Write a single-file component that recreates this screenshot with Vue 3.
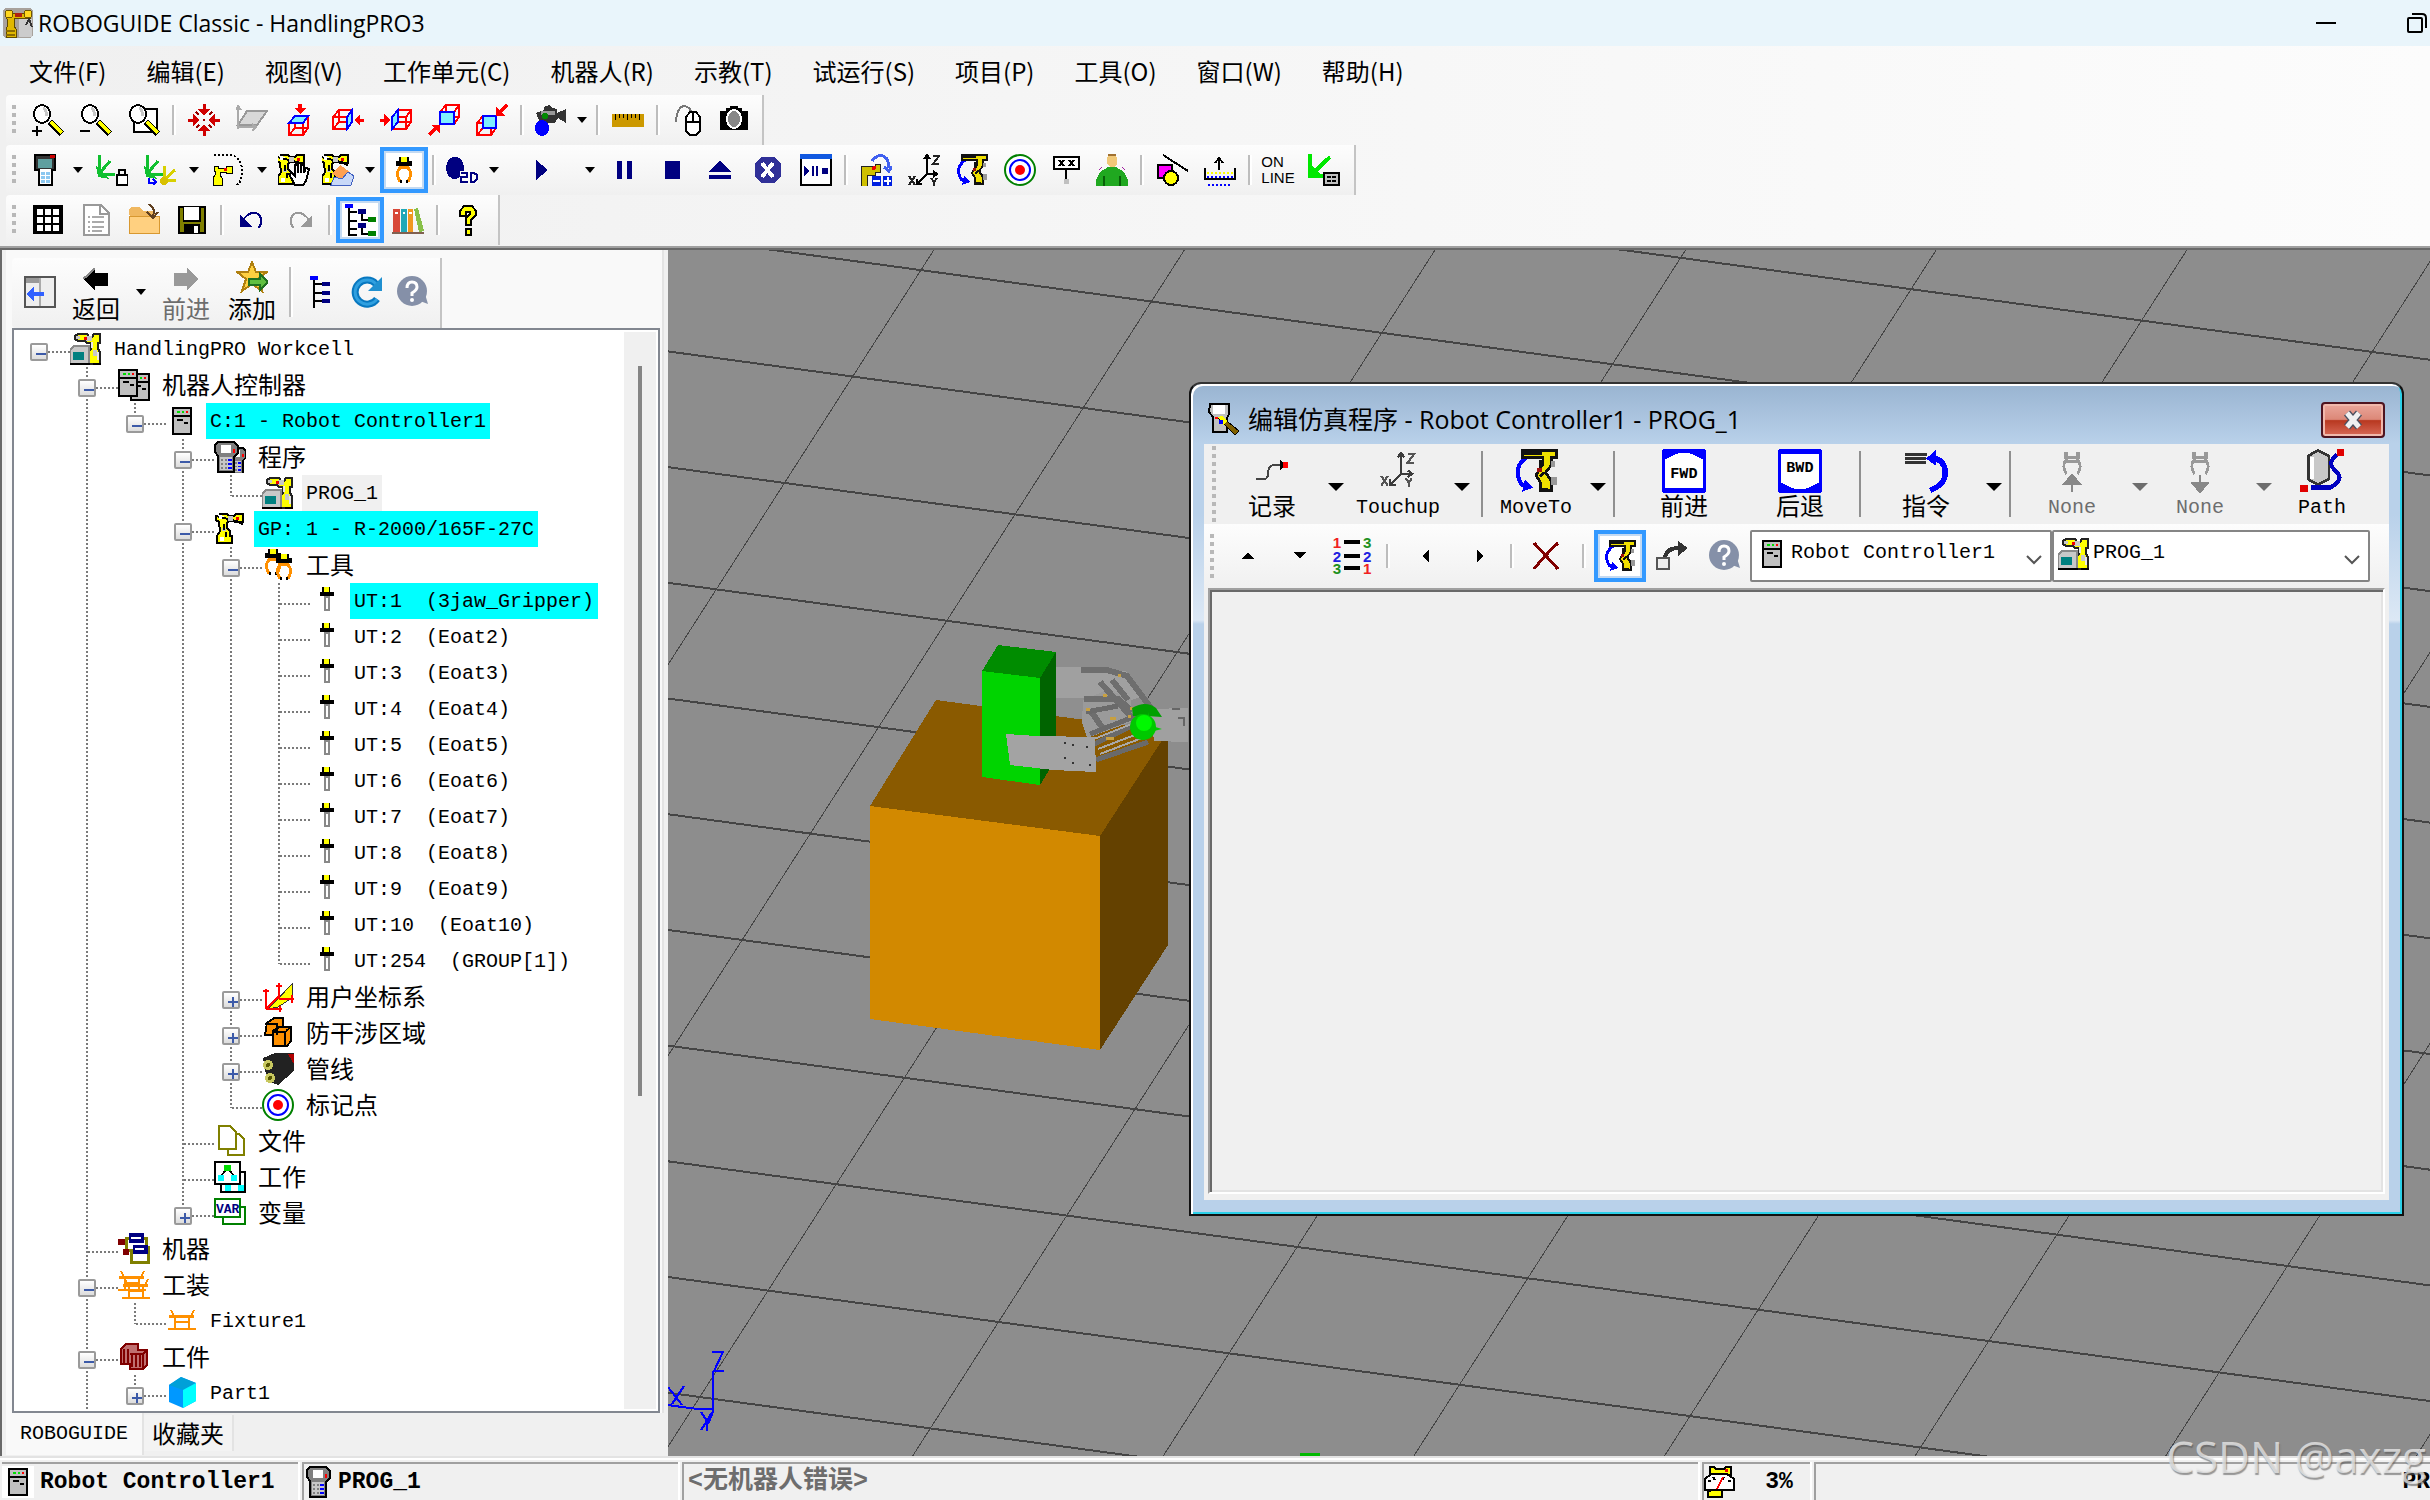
<script setup>
import { ref } from 'vue'

const menus = ['文件(F)', '编辑(E)', '视图(V)', '工作单元(C)', '机器人(R)', '示教(T)', '试运行(S)', '项目(P)', '工具(O)', '窗口(W)', '帮助(H)']

const lens = '<ellipse cx="10" cy="10" rx="8" ry="9" fill="#fff" stroke="#000" stroke-width="2"/><path d="M11 4q4 2 3 8" fill="none" stroke="#c8c8c8" stroke-width="3"/><path d="M18 18L30 30" stroke="#000" stroke-width="7"/><path d="M19 18L30 29" stroke="#ff0" stroke-width="4"/>'
const wire = (x, y) => `<path d="M${x} ${y + 7}h14v12h-14zM${x + 6} ${y}h13v12h-13zM${x} ${y + 7}l6 -7M${x + 14} ${y + 7}l5 -7M${x + 14} ${y + 19}l5 -7M${x} ${y + 19}l6 -7" fill="none" stroke="#f00" stroke-width="2"/>`
const face = (d) => `<path d="${d}" fill="#7fefff" stroke="#00f" stroke-width="2"/>`
const arm = '<path d="M5 1h8l2 2h5l2-2h7v8h-3v2M26 9h-5l-2-1h-5l-1 3v4l3 3v5h2v7H3v-7l3-5l-1-8V9L2 7V3z" fill="#ff0" stroke="#000" stroke-width="2"/><path d="M14 3h5v5h-5zM8 15h4v3H8z" fill="#c8c8c8"/><path d="M5 3h3v3H5zM6 24h4v4H6z" fill="#fff"/><rect x="22" y="4" width="3" height="3" fill="#e00"/><path d="M28 9v3M10 11v6M12 19v5" stroke="#000" stroke-width="2"/>'
const cell = '<path d="M8 1h9l2 3h3l2-3h6v9h-2v6l2 3v12H18V19l3-3v-6h-4l-2-2H8L5 6V3z" fill="#ff0" stroke="#222" stroke-width="2"/><path d="M16 3h6v5h-6zM23 17h4v6h-4zM6 3h4v3H6z" fill="#c8c8c8"/><path d="M22 9v6M28 19v8" stroke="#e8e8e8" stroke-width="2"/><rect x="14" y="4" width="3" height="3" fill="#e00"/><path d="M4 13h15v18H0V17z" fill="#c8c8c8" stroke="#888" stroke-width="2"/><rect x="3" y="19" width="11" height="8" fill="#008080"/><path d="M0 31h20M23 31h8" stroke="#000" stroke-width="2"/>'
const box = (x, y) => `<rect x="${x}" y="${y}" width="18" height="26" fill="#c0c0c0" stroke="#000" stroke-width="2"/><path d="M${x} ${y + 8}h18" stroke="#000" stroke-width="2"/><path d="M${x + 4} ${y + 4}h3M${x + 9} ${y + 4}h2" stroke="#0d0" stroke-width="2"/><path d="M${x + 13} ${y + 4}h2" stroke="#f00" stroke-width="2"/><path d="M${x + 4} ${y + 12}h6M${x + 11} ${y + 15}h4" stroke="#000" stroke-width="2" fill="none"/>`
const pendant = (x, y) => `<path d="M${x + 2} ${y}h16l4 4v7l-4 4v15h-16V15l-3-4V4z" fill="#808080" stroke="#000" stroke-width="2"/><path d="M${x + 5} ${y + 3}h10v8h-10z" fill="#fff"/><path d="M${x + 4} ${y + 15}h12v13h-12z" fill="#c8c8c8"/><path d="M${x + 5} ${y + 18}h6m-6 4h6m-6 4h6" stroke="#808080" stroke-width="2" stroke-dasharray="2 2"/><path d="M${x + 12} ${y + 18}h4m-4 4h4m-4 4h4" stroke="#00f" stroke-width="2"/><rect x="${x + 17}" y="${y + 7}" width="2" height="4" fill="#f00"/>`
const claw = (x, y) => `<path d="M${x + 5} ${y + 10}q-5 4 -3 10l2 5M${x + 11} ${y + 10}q5 4 3 10l-2 5M${x + 4} ${y + 10}h8" fill="none" stroke="#ff9000" stroke-width="3"/><path d="M${x + 3} ${y}h10v4h3v5h-16v-5h3z" fill="#000"/><rect x="${x + 5}" y="${y}" width="6" height="5" fill="#ff0"/><path d="M${x + 5} ${y + 23}v3M${x + 11} ${y + 23}v3" stroke="#000" stroke-width="2"/>`
const moveTo = '<path d="M9 6Q1 12 3 20T10 27" fill="none" stroke="#00f" stroke-width="3"/><path d="M6 31l8-3l-6-6z" fill="#00f"/><path d="M6 1h25v5h-4v6l-4 5l4 6v7h-8v-6l-3-5l5-8V6H6z" fill="#f0e000" stroke="#111" stroke-width="2"/><path d="M6 3h14M22 9h-3v4M22 17l-3 3M20 29h5" fill="none" stroke="#111" stroke-width="2"/><rect x="17" y="14" width="3" height="3" fill="#a01010"/><path d="M27 20h4v6h-4zM27 9h3v4h-3z" fill="#999"/>'
const target = '<g shape-rendering="auto"><circle cx="16" cy="16" r="15" fill="#fff" stroke="#008000" stroke-width="2"/><circle cx="16" cy="16" r="10" fill="none" stroke="#00f" stroke-width="2"/><circle cx="16" cy="16" r="5" fill="#f00"/></g>'
const treeArt = '<path d="M0 0h8v4H0z" fill="#00f"/><path d="M4 4v28M4 8h8M4 17h8M4 25h8" stroke="#000" stroke-width="2" fill="none"/>'
const help = '<g shape-rendering="auto"><circle cx="16" cy="15" r="15" fill="#8590a8"/><path d="M24 25l8 3l-3-10z" fill="#8590a8"/><path d="M11 12q0-6 5-6t5 5q0 3-5 6v3" fill="none" stroke="#fff" stroke-width="3"/><circle cx="16" cy="24" r="2" fill="#fff"/></g>'
const fixture = (x, y) => `<path d="M${x + 3} ${y}l3 6h17l3-6M${x} ${y + 19}h28M${x + 7} ${y + 7}v12M${x + 21} ${y + 7}v12M${x + 7} ${y + 12}h14" fill="none" stroke="#ff9000" stroke-width="2"/><path d="M${x + 1} ${y + 6}h25" stroke="#ff9000" stroke-width="3"/>`
const xyz = '<path d="M19 2v18h9M19 20L9 30M16 5l3-4l3 4M25 17l4 3l-4 3M9 25v5h5" fill="none" stroke="#000" stroke-width="2"/><path d="M25 2h6l-6 8h6M1 22l6 9M7 22l-6 9M23 24l3 4l3-4M26 28v4" fill="none" stroke="#222" stroke-width="2"/>'
const axes = (c) => `<path d="M3 1v19l16 1M3 20L14 7" fill="none" stroke="${c}" stroke-width="3"/><path d="M0 12l2 11l12 2z" fill="${c}"/>`

const art = {
  app: '<rect x="1" y="1" width="30" height="30" rx="4" fill="#a8a29c"/><rect x="17" y="12" width="13" height="18" fill="#ccc"/><path d="M4 6h24v5H12v8l2 3v8H4v-8l2-4z" fill="#e0b800" stroke="#604c00"/><circle cx="7" cy="7" r="4" fill="#ffd820" stroke="#705800"/><circle cx="26" cy="7" r="4" fill="#ffd820" stroke="#705800"/><path d="M13 6h7v4h-7z" fill="#b02010"/><path d="M24 18l3-6l3 8" fill="none" stroke="#333" stroke-width="2"/><path d="M4 24h9M4 28h9" stroke="#8c6c00" stroke-width="2"/>',
  zoomIn: lens + '<path d="M0 27h10M5 22v10" stroke="#000" stroke-width="2"/>',
  zoomOut: lens + '<path d="M0 27h10" stroke="#000" stroke-width="2"/>',
  zoomWin: '<rect x="6" y="5" width="23" height="23" fill="#fff" stroke="#000" stroke-width="2"/>' + lens,
  center: '<path d="M16 0v10M16 22v10M0 16h10M22 16h10" stroke="#d00000" stroke-width="3"/><path d="M10 5h12l-6 7zM10 27h12l-6-7zM5 10v12l7-6zM27 10v12l-7-6z" fill="#d00000"/><path d="M8 8l3 3M21 21l3 3M24 8l-3 3M11 21l-3 3M15 16h2" stroke="#900" stroke-width="2"/>',
  plane: '<path d="M11 7h20L21 21H2z" fill="#d8d8d8" stroke="#999" stroke-width="2"/><path d="M2 25V4M2 23h16M0 6l2-4l3 4M16 20l4 3l-4 4" fill="none" stroke="#aaa" stroke-width="2"/>',
  cubeTop: wire(5, 12) + face('M5 19l6-7h13l-5 7z') + '<path d="M16 0v6" stroke="#f00" stroke-width="4"/><path d="M10 4h12l-6 6z" fill="#f00"/>',
  cubeRight: wire(1, 6) + face('M15 13l5-7v12l-5 7z') + '<path d="M32 16h-6" stroke="#f00" stroke-width="3"/><path d="M28 10v12l-6-6z" fill="#f00"/>',
  cubeLeft: wire(12, 6) + face('M12 13l6-7v12l-6 7z') + '<path d="M0 16h6" stroke="#f00" stroke-width="3"/><path d="M4 10v12l6-6z" fill="#f00"/>',
  cubeFront: wire(12, 1) + face('M12 8h14v12H12z') + '<path d="M1 31l7-7" stroke="#f00" stroke-width="3"/><path d="M3 21h9v9z" fill="#f00"/>',
  cubeBack: wire(1, 12) + face('M7 12h13v12H7z') + '<path d="M31 1l-7 7" stroke="#f00" stroke-width="3"/><path d="M20 3v9h9z" fill="#f00"/>',
  camera: '<path d="M2 9l8-3V3l5-2l4 3l4 1v4l9-4v14l-8-5l-3 5H6z" fill="#333"/><path d="M7 7h14v4H7z" fill="#999"/><circle cx="11" cy="12" r="3" fill="#080"/><ellipse cx="8" cy="24" rx="7" ry="8" fill="#00f"/>',
  ruler: '<rect x="0" y="10" width="32" height="13" fill="#cc9900"/><path d="M3 10v6M7 10v4M11 10v4M15 10v6M19 10v4M23 10v4M27 10v6" stroke="#000" stroke-width="1"/>',
  mouse: '<path d="M4 18Q5 3 12 2Q19 3 19 9" fill="none" stroke="#777" stroke-width="2"/><path d="M18 8h6l4 5v14l-4 4h-6l-4-4V13z" fill="#fff" stroke="#000" stroke-width="2"/><path d="M14 18h14M21 8v10" stroke="#000" stroke-width="2"/>',
  photo: '<path d="M2 7h6V4h4V2h8v2h4v3h6v19H2z" fill="#000"/><ellipse cx="16" cy="15" rx="7" ry="9" fill="#888" stroke="#fff" stroke-width="2"/>',
  tp: '<path d="M5 1h20v15h-3v15H9V16H5z" fill="#fff" stroke="#000" stroke-width="2"/><path d="M6 2h18v13H6z" fill="#333"/><rect x="8" y="5" width="14" height="9" fill="#5f9f9f"/><path d="M20 1h5v3h-5z" fill="#c00"/><path d="M11 19h10m-10 4h10m-10 4h10" stroke="#8cc8f0" stroke-width="3" stroke-dasharray="4 1"/>',
  axesLock: axes('#10c030') + '<rect x="21" y="21" width="11" height="10" fill="#fff" stroke="#000" stroke-width="2"/><path d="M23 20v-4h6v4" fill="none" stroke="#000" stroke-width="2"/>',
  axesPair: axes('#10c030') + '<path d="M20 12v14l12 1M20 26l11-10" fill="none" stroke="#d8d000" stroke-width="3"/><circle cx="20" cy="27" r="4" fill="#d8c000"/><path d="M5 24v5h6M9 25l3 3l-3 3" fill="none" stroke="#00f" stroke-width="2"/>',
  robotPath: '<path d="M2 1h18q10 4 10 16t-6 14" fill="none" stroke="#000" stroke-width="2" stroke-dasharray="2 2"/><path d="M2 12h4v2h8v-2h6v7h-6v-1H8v3l2 3v7H1v-7l2-3v-4H2z" fill="#ff0" stroke="#000" stroke-width="1"/><rect x="12" y="14" width="3" height="3" fill="#e00"/>',
  robotHand: '<g transform="translate(-3 0)">' + arm + '</g><path d="M17 31l-6-11l3-1l3 3V11h3v8V9h3v10V11h3v8l2-5l3 1l-3 12l-3 4z" fill="#fff" stroke="#000" stroke-width="2"/>',
  robotHit: '<g transform="translate(-3 0)">' + arm + '</g><path d="M10 20l8-9l10 7l-6 9z" fill="#ffa050"/><path d="M9 31l3-8l8 2l6-7l6 4l-3 9z" fill="#c8d8f8" stroke="#4060c0" stroke-width="1"/>',
  claw: claw(8, 3),
  twoD: '<ellipse cx="9" cy="14" rx="9" ry="11" fill="#000080"/><rect x="14" y="17" width="18" height="13" fill="#fafafa"/><path d="M15 19h6v4h-6v5h7M25 19v9h3l3-3v-4l-3-2z" fill="none" stroke="#000080" stroke-width="2"/>',
  play: '<path d="M10 6l12 10l-12 10z" fill="#000080"/>',
  pause: '<path d="M9 7h5v18H9zM19 7h5v18h-5z" fill="#000080"/>',
  stop: '<path d="M9 7h15v18H9z" fill="#000080"/>',
  eject: '<path d="M16 7l12 11H4zM5 21h22v4H5z" fill="#000080"/>',
  abort: '<path d="M9 3h13l7 7v12l-7 7H9l-6-7V10z" fill="#303098"/><path d="M10 9l11 14M21 9L10 23" stroke="#fff" stroke-width="4"/>',
  panel: '<rect x="1" y="1" width="30" height="30" fill="#fff" stroke="#000" stroke-width="2"/><rect width="32" height="5" fill="#1058e0"/><path d="M4 12l6 5l-6 5zM12 12h2v10h-2zM16 12h2v10h-2zM22 14h6v6h-6z" fill="#000080"/>',
  robotJog: '<path d="M1 12h14v-2h5v8h-5v3H7v11H1z" fill="#cfc000" stroke="#222"/><circle cx="14" cy="14" r="2" fill="#e00"/><path d="M12 7Q20-3 27 5q2 4 1 9M24 13l5 4l3-5" fill="none" stroke="#4060f0" stroke-width="3"/><path d="M12 22h9v10h-9zM23 22h9v10h-9z" fill="#0020e0"/><path d="M13 27h7M24 27h7M28 23v8" stroke="#fff" stroke-width="2"/>',
  xyz, moveTo, target,
  touch: '<g transform="translate(3 2) scale(.8)" opacity=".75">' + xyz + '</g>',
  sign: '<rect x="4" y="3" width="25" height="12" fill="#fff" stroke="#000" stroke-width="2"/><path d="M9 6l5 6M14 6l-5 6M19 6l5 6M24 6l-5 6M16 15v11" stroke="#000" stroke-width="2"/><rect x="14" y="25" width="5" height="5" fill="#c0c0c0"/>',
  person: '<path d="M13 1h6l2 3v6l-3 3h-4l-3-3V4z" fill="#f0c878"/><path d="M12 1h8" stroke="#a07030" stroke-width="2"/><path d="M12 13h8l8 5l4 8v6H0v-6l4-8z" fill="#20a820"/><path d="M8 22v10M24 22v10" stroke="#086008" stroke-width="2"/><path d="M3 16l3-3M29 16l-3-3" stroke="#a020a0"/>',
  shapes: '<path d="M7 1l25 16" stroke="#000" stroke-width="2"/><rect x="2" y="11" width="14" height="13" fill="#f0f" stroke="#000" stroke-width="2"/><circle cx="15" cy="24" r="7" fill="#ff0" stroke="#000" stroke-width="2"/>',
  gauge: '<path d="M1 14v11h30V14M15 5v11M11 9l4-5l4 5" fill="none" stroke="#000" stroke-width="2"/><path d="M3 19h26" stroke="#ff0" stroke-width="2" stroke-dasharray="2 2"/><path d="M3 23h26M4 31h24" stroke="#00f" stroke-width="2" stroke-dasharray="2 2"/>',
  axesPanel: '<path d="M2 0v22h16M4 20L22 3" fill="none" stroke="#00e800" stroke-width="4"/><path d="M0 8l2 15h14z" fill="#00e800"/><rect x="16" y="19" width="15" height="12" fill="#c0c0c0" stroke="#000" stroke-width="2"/><path d="M19 23h9M19 27h9" stroke="#000" stroke-width="2" stroke-dasharray="4 1"/>',
  grid: '<rect x="1" y="1" width="30" height="29" fill="#000"/><path d="M5 5h6v6H5zM13 5h6v6h-6zM21 5h6v6h-6zM5 13h6v6H5zM13 13h6v6h-6zM21 13h6v6h-6zM5 21h6v6H5zM13 21h6v6h-6zM21 21h6v6h-6z" fill="#fff"/>',
  doc: '<path d="M4 1h17l8 8v22H4z" fill="#fff" stroke="#999" stroke-width="2"/><path d="M20 1v9h8" fill="none" stroke="#999" stroke-width="2"/><path d="M8 13h2m2 0h12M8 18h2m2 0h12M8 23h2m2 0h12M8 27h2m2 0h10" stroke="#aaa" stroke-width="2"/>',
  folder: '<path d="M1 6l2-3h9l3 4h12v20H3z" fill="#f0b860"/><path d="M1 29V12h30v17z" fill="#ffd080" stroke="#d89830"/><path d="M20 0q8 3 5 12M19 8l6 6l5-6" fill="none" stroke="#604020" stroke-width="2"/>',
  save: '<path d="M2 2h28v28H2z" fill="#000"/><path d="M4 4h3v14h18V4h3v24H4z" fill="#808000"/><path d="M8 3h15v13H8z" fill="#fff"/><path d="M8 20h16v9H8z" fill="#000"/><path d="M18 22h4v7h-4z" fill="#fff"/>',
  undo: '<path d="M7 16Q14 6 22 10q7 7 0 14" fill="none" stroke="#000080" stroke-width="2"/><path d="M4 11v12h12z" fill="#000080"/>',
  redo: '<path d="M25 16Q18 6 10 10q-7 7 0 14" fill="none" stroke="#999" stroke-width="2"/><path d="M28 11v12H16z" fill="#999"/>',
  treeView: '<g transform="translate(1 0)">' + treeArt + '<path d="M4 31h8M17 10v6h6M17 24v6h6" stroke="#000" stroke-width="2" fill="none"/><path d="M13 5h8v5h-8zM13 19h8v5h-8z" fill="#000080"/><path d="M23 13h8v5h-8zM23 27h8v5h-8z" fill="#008000"/></g>',
  books: '<path d="M1 5h7v23H1z" fill="#d84838"/><path d="M9 5h6v23H9z" fill="#20a8b8"/><path d="M16 5h5v23h-5z" fill="#f09820"/><path d="M22 5l4-1l6 23l-5 1z" fill="#88c048"/><path d="M0 29h32" stroke="#806050" stroke-width="2"/><path d="M3 9h3M11 9h2M17 9h3" stroke="#fff" stroke-width="2"/>',
  question: '<path d="M8 12V7l4-5h8l4 5v4l-5 5v5h-5v-7l4-4V8h-4v4zM14 25h5v6h-5z" fill="#ff0" stroke="#000" stroke-width="2"/>',
  collapse: '<rect x="1" y="1" width="30" height="30" fill="#eee" stroke="#555" stroke-width="2"/><path d="M2 2h14v5H2z" fill="#999"/><path d="M16 2v28" stroke="#aaa" stroke-width="2"/><path d="M6 18h14" stroke="#3060ff" stroke-width="4"/><path d="M2 18l8-7v14z" fill="#3060ff"/>',
  back: '<path d="M2 11L13 0v5h12v12H13v5z" fill="#000"/><path d="M2 11L13 1" stroke="#888" stroke-width="2"/>',
  forward: '<path d="M26 11L15 0v5H3v12h12v5z" fill="#999"/>',
  star: '<path d="M16 1l4 10h11l-9 7l4 12l-10-7l-10 7l4-12L1 11h11z" fill="#ffd040" stroke="#b08010" stroke-width="2"/><path d="M13 18h11v-5l8 8l-8 8v-5H13z" fill="#60c040" stroke="#207020" stroke-width="2"/>',
  treeList: '<g transform="translate(6 0)">' + treeArt + '<path d="M12 6h8v4h-8zM12 15h8v4h-8zM12 23h8v4h-8z" fill="#000080"/></g>',
  refresh: '<g shape-rendering="auto"><path d="M27 23A12 12 0 1 1 26 8" fill="none" stroke="#0878c0" stroke-width="7"/><path d="M27 23A12 12 0 1 1 26 8" fill="none" stroke="#30a0e0" stroke-width="3"/><path d="M32 1v14H18z" fill="#2090d0"/></g>',
  help, cell, arm,
  controllers: '<g transform="translate(12 5)">' + box(1, 0) + '</g>' + box(1, 1),
  controller: box(7, 3),
  programs: '<g transform="translate(11 6) scale(.85)">' + pendant(3, 1) + '</g>' + pendant(2, 1),
  pendant: pendant(4, 1),
  claws: claw(3, 0) + '<g transform="translate(12 5)">' + claw(2, 0) + '</g>',
  bolt: '<path d="M12 2h8v5h4v4H10V7h2z" fill="#000"/><path d="M14 2h5v5h-5z" fill="#ff0"/><path d="M15 12h4v13h-4z" fill="#fff" stroke="#888" stroke-width="2"/>',
  frames: '<path d="M6 28L30 3v14L16 26z" fill="#ff0" stroke="#333"/><path d="M4 28V8M1 10h6M4 28h16M18 25v6M17 18V2M14 5h6M17 18h15M30 14v8M4 28L17 15" fill="none" stroke="#f00" stroke-width="2"/>',
  cubes: '<path d="M5 6l7-5h9v12l-5 5H3z" fill="#ff9000" stroke="#000" stroke-width="2"/><path d="M3 7h12v11M11 14l6-4h12v14l-4 5H11zM11 15h12v14M24 14l5-4" fill="#ff9000" stroke="#000" stroke-width="2"/>',
  pipes: '<path d="M1 5l12-5h19v18L16 32L5 28z" fill="#222"/><path d="M26 1h6v10z" fill="#b00000"/><circle cx="6" cy="12" r="5" fill="#c8c860"/><circle cx="8" cy="25" r="5" fill="#c8c860"/><circle cx="6" cy="12" r="2" fill="#555500"/><circle cx="8" cy="25" r="2" fill="#555500"/>',
  files: '<path d="M14 9h11l5 5v16H14z" fill="#fff" stroke="#808000" stroke-width="2"/><path d="M5 1h11l6 6v17H5z" fill="#fff" stroke="#808000" stroke-width="2"/>',
  jobs: '<rect x="7" y="11" width="24" height="20" fill="#fff" stroke="#000" stroke-width="2"/><path d="M11 24h6v6h-6zM24 24h6v6h-6z" fill="#0ff"/><rect x="1" y="1" width="25" height="22" fill="#fff" stroke="#000" stroke-width="2"/><path d="M10 4h7v6h-7z" fill="#0d0"/><path d="M11 10l-4 5M16 10l4 5" stroke="#000" stroke-width="2"/><path d="M4 14h6v6H4zM17 14h6v6h-6z" fill="#0ff"/>',
  vars: '<rect x="9" y="10" width="22" height="17" fill="#fff" stroke="#008000" stroke-width="2"/><rect x="1" y="2" width="25" height="18" fill="#fff" stroke="#008000" stroke-width="2"/><text x="2" y="16" font-family="Liberation Mono, monospace" font-weight="700" font-size="13" fill="#000080">VAR</text>',
  machines: '<rect x="13" y="14" width="17" height="15" fill="#fff" stroke="#808000" stroke-width="3"/><path d="M8 5h20v12H8z" fill="#fff" stroke="#808000" stroke-width="3"/><path d="M11 0h15v10H11zM15 12h15v9H15z" fill="#000080"/><path d="M13 5h10M17 16h9" stroke="#fff" stroke-width="2"/><path d="M0 6h7v6H0zM5 16h6v6H5z" fill="#800000"/>',
  fixtures: fixture(0, 2) + fixture(4, 10),
  fixture: fixture(2, 5),
  parts: '<path d="M3 8l5-5h12v6h9v15l-4 4H12v-5H3z" fill="#c07070" stroke="#800000" stroke-width="2"/><path d="M6 8v14M10 8v14M14 14v12M18 14v12M22 14v12M12 13h13l4-4M25 13v14" stroke="#800000" stroke-width="2" fill="none"/>',
  part: '<g shape-rendering="auto"><path d="M3 8l12-8l15 6v18L17 31L3 25z" fill="#0098ff"/><path d="M3 8l12-8l15 6l-13 7z" fill="#00a0d8"/><path d="M17 13l13-7v18l-13 7z" fill="#0ff"/></g>',
  gaugeRobot: '<path d="M6 1h4l2 2h8l2-2h5v8h-4v-1H6z" fill="#ff0" stroke="#000" stroke-width="2"/><rect x="21" y="3" width="3" height="3" fill="#e00"/><path d="M8 24h10v7H4v-5z" fill="#ff0" stroke="#000" stroke-width="2"/><path d="M1 24V13l6-5h16l7 5v11z" fill="#fff" stroke="#000" stroke-width="2"/><path d="M4 15h3M9 11l2 3M20 11l-2 3M24 15h3" stroke="#000" stroke-width="2"/><path d="M13 23l6-12" stroke="#f00" stroke-width="2"/>',
  edit: '<path d="M2 1h19v10l-2 4v14H5V14L1 9z" fill="#c0c0c0" stroke="#000" stroke-width="2"/><path d="M5 2h12v9H5z" fill="#fff"/><path d="M7 15h3" stroke="#f00" stroke-width="2"/><path d="M10 15l4-1l17 14l-4 4z" fill="#806000" stroke="#000"/><path d="M10 14l4-1l5 5l-4 4z" fill="#ff0"/><path d="M11 17h4v4h-4z" fill="#00f"/>',
  record: '<path d="M0 21h8q4 0 4-6t5-8h8" fill="none" stroke="#444" stroke-width="2"/><path d="M24 1v11l5-5z" fill="#000"/><path d="M27 4h5v6h-5z" fill="#f00"/>',
  fwd: '<rect x="1" y="1" width="30" height="30" rx="1" fill="#fff" stroke="#00f" stroke-width="2"/><path d="M1 1h30v7L20 3h-8L1 8z" fill="#00f"/><path d="M1 30h30" stroke="#00f" stroke-width="3"/><text x="6" y="21" font-family="Liberation Mono, monospace" font-weight="700" font-size="11">FWD</text>',
  bwd: '<rect x="1" y="1" width="30" height="30" rx="1" fill="#fff" stroke="#00f" stroke-width="2"/><path d="M1 31h30v-7l-11 5h-8L1 24z" fill="#00f"/><path d="M1 2h30" stroke="#00f" stroke-width="3"/><text x="6" y="17" font-family="Liberation Mono, monospace" font-weight="700" font-size="11">BWD</text>',
  insert: '<path d="M1 4h16M1 7h15M1 10h15" stroke="#333" stroke-width="2"/><path d="M20 6q10 2 10 11t-11 13" fill="none" stroke="#00f" stroke-width="4"/><path d="M16 7l7-6v11z" fill="#00f"/>',
  pick: '<path d="M10 2h3v3h6V2h3v5H10z" fill="#999"/><path d="M12 7q-4 6 0 11M20 7q4 6 0 11M11 9h10" fill="none" stroke="#999" stroke-width="2"/><path d="M16 31v-8M11 25h10l-5-6z" fill="#888" stroke="#888" stroke-width="2"/>',
  drop: '<path d="M10 2h3v3h6V2h3v5H10z" fill="#999"/><path d="M12 7q-4 6 0 11M20 7q4 6 0 11M11 9h10" fill="none" stroke="#999" stroke-width="2"/><path d="M16 19v7M11 25h10l-5 6z" fill="#888" stroke="#888" stroke-width="2"/>',
  path: '<path d="M6 5l7-4l8 4v17l-8 4l-7-4z" fill="#c8c8c8" stroke="#333" stroke-width="2"/><path d="M9 6v16" stroke="#fff" stroke-width="3"/><path d="M27 4q-8 6-1 12t-4 12H8" fill="none" stroke="#0000c0" stroke-width="3"/><path d="M27 0h5v5h-5zM0 26h6v5H0z" fill="#e00000"/>',
  renum: '<path d="M10 6h12M10 16h12M10 25h12" stroke="#000" stroke-width="3"/><g font-family="Liberation Sans, sans-serif" font-weight="700" font-size="11"><text x="2" y="10" fill="#f02020">1</text><text x="24" y="10" fill="#209020">3</text><text x="2" y="20" fill="#2020e0">2</text><text x="24" y="20" fill="#2020e0">2</text><text x="2" y="29" fill="#209020">3</text><text x="24" y="29" fill="#f02020">1</text></g>',
  up: '<path d="M16 12l6 7H10z"/>',
  down: '<path d="M16 19l6-7H10z"/>',
  left: '<path d="M12 16l7-6v12z"/>',
  right: '<path d="M20 16l-7-6v12z"/>',
  del: '<path d="M4 3l24 26M28 3Q16 14 4 29" fill="none" stroke="#800000" stroke-width="3"/>',
  goto: '<path d="M1 18h12v11H1z" fill="#eee" stroke="#555" stroke-width="2"/><path d="M9 17q2-9 14-9" fill="none" stroke="#333" stroke-width="4"/><path d="M22 1l10 7l-10 8z" fill="#333"/>'
}

const toolbars = [
  ['zoomIn', 'zoomOut', 'zoomWin', '|', 'center', 'plane', 'cubeTop', 'cubeRight', 'cubeLeft', 'cubeFront', 'cubeBack', '|', 'camera:narrow', 'v', '|', 'ruler', '|', 'mouse', 'photo:narrow'],
  ['tp:narrow', 'v', 'axesLock', 'axesPair', 'v', 'robotPath', 'v', 'robotHand:narrow', 'robotHit:narrow', 'v', 'claw:on', '|', 'twoD:narrow', 'v', 'play:wide', 'v', 'pause', 'stop', 'eject', 'abort', 'panel', '|', 'robotJog', 'xyz', 'moveTo', 'target', 'sign:narrow', 'person', '|', 'shapes', 'gauge', '|', 'ONLINE:narrow', 'axesPanel'],
  ['grid', 'doc', 'folder', 'save', '|', 'undo', 'redo', '|', 'treeView:on', 'books', '|', 'question']
].map((row) => row.map((entry) => {
  const [icon, mod] = entry.split(':')
  return { icon, mod }
}))

const tools = [
  ['UT:1  (3jaw_Gripper)', 'hot'], ['UT:2  (Eoat2)'], ['UT:3  (Eoat3)'], ['UT:4  (Eoat4)'], ['UT:5  (Eoat5)'], ['UT:6  (Eoat6)'],
  ['UT:7  (Eoat7)'], ['UT:8  (Eoat8)'], ['UT:9  (Eoat9)'], ['UT:10  (Eoat10)'], ['UT:254  (GROUP[1])']
].map(([label, tone]) => ({ label, tone, icon: 'bolt' }))

const tree = [{
  label: 'HandlingPRO Workcell', icon: 'cell', sign: '-', kids: [
    { label: '机器人控制器', icon: 'controllers', sign: '-', cjk: true, kids: [
      { label: 'C:1 - Robot Controller1', icon: 'controller', sign: '-', tone: 'hot', kids: [
        { label: '程序', icon: 'programs', sign: '-', cjk: true, kids: [{ label: 'PROG_1', icon: 'cell', tone: 'dim' }] },
        { label: 'GP: 1 - R-2000/165F-27C', icon: 'arm', sign: '-', tone: 'hot', kids: [
          { label: '工具', icon: 'claws', sign: '-', cjk: true, kids: tools },
          { label: '用户坐标系', icon: 'frames', sign: '+', cjk: true },
          { label: '防干涉区域', icon: 'cubes', sign: '+', cjk: true },
          { label: '管线', icon: 'pipes', sign: '+', cjk: true },
          { label: '标记点', icon: 'target', cjk: true }
        ] },
        { label: '文件', icon: 'files', cjk: true },
        { label: '工作', icon: 'jobs', cjk: true },
        { label: '变量', icon: 'vars', sign: '+', cjk: true }
      ] }
    ] },
    { label: '机器', icon: 'machines', cjk: true },
    { label: '工装', icon: 'fixtures', sign: '-', cjk: true, kids: [{ label: 'Fixture1', icon: 'fixture' }] },
    { label: '工件', icon: 'parts', sign: '-', cjk: true, more: true, kids: [{ label: 'Part1', icon: 'part', sign: '+' }] }
  ]
}]

const rows = []
const walk = (nodes, guides) => nodes.forEach((node, i) => {
  const next = i < nodes.length - 1 || !!node.more
  rows.push({ ...node, guides, next, root: !guides.length && i === 0 })
  if (node.kids) walk(node.kids, [...guides, next])
})
walk(tree, [])

const editTools = [
  { icon: 'record', label: '记录', w: 96, cjk: true }, { icon: 'v', w: 32 },
  { icon: 'touch', label: 'Touchup', w: 92, big: true }, { icon: 'v', w: 36 }, { icon: '|', w: 4 },
  { icon: 'moveTo', label: 'MoveTo', w: 104, big: true }, { icon: 'v', w: 20 }, { icon: '|', w: 12 },
  { icon: 'fwd', label: '前进', w: 128, cjk: true, big: true },
  { icon: 'bwd', label: '后退', w: 104, cjk: true, big: true }, { icon: '|', w: 16 },
  { icon: 'insert', label: '指令', w: 116, cjk: true, big: true }, { icon: 'v', w: 20 }, { icon: '|', w: 12 },
  { icon: 'pick', label: 'None', w: 112, big: true, off: true }, { icon: 'v', w: 24, off: true },
  { icon: 'drop', label: 'None', w: 96, big: true, off: true }, { icon: 'v', w: 32, off: true },
  { icon: 'path', label: 'Path', w: 84, big: true }
]
const lineTools = [
  { icon: 'up', w: 52 }, { icon: 'down', w: 52 }, { icon: 'renum', w: 52, big: true }, { icon: '|', w: 20 },
  { icon: 'left', w: 56 }, { icon: 'right', w: 52 }, { icon: '|', w: 12 },
  { icon: 'del', w: 56 }, { icon: '|', w: 20 }, { icon: 'moveTo', w: 52, on: true },
  { icon: 'goto', w: 52 }, { icon: 'help', w: 52 }
]

const floorRows = Array.from({ length: 14 }, (_, i) => 120 + i * 115.7)
const floorCols = Array.from({ length: 11 }, (_, i) => 160.8 + i * 250.6)
const controller = ref('Robot Controller1')
const program = ref('PROG_1')
</script>

<template>
  <div class="app">
    <header class="titlebar">
      <svg class="ico" viewBox="0 0 32 32" v-html="art.app" />
      <h1>ROBOGUIDE Classic - HandlingPRO3</h1>
      <button class="sys" aria-label="Minimize"><svg viewBox="0 0 20 20"><path d="M0 10h20" stroke="#000" stroke-width="2" /></svg></button>
      <button class="sys last" aria-label="Restore"><svg viewBox="0 0 20 20"><path d="M1 6q0-1 1-1h12q1 0 1 1v12q0 1-1 1H2q-1 0-1-1zM5 1h10q4 0 4 4v10" fill="none" stroke="#000" stroke-width="2" /></svg></button>
    </header>

    <nav class="menubar"><button v-for="m in menus" :key="m">{{ m }}</button></nav>

    <div class="bars">
      <div v-for="(bar, i) in toolbars" :key="i" class="bar">
        <i class="grip" />
        <template v-for="(t, j) in bar" :key="j">
          <i v-if="t.icon === '|'" class="sep" />
          <button v-else-if="t.icon === 'v'" class="drop" aria-label="More"><i class="caret" /></button>
          <button v-else class="tool" :class="t.mod" :aria-label="t.icon">
            <span v-if="t.icon === 'ONLINE'" class="online">ON<br>LINE</span>
            <svg v-else class="ico" viewBox="0 0 32 32" v-html="art[t.icon]" />
          </button>
        </template>
      </div>
    </div>

    <main class="work">
      <aside class="side">
        <div class="page">
          <div class="bar nav">
            <button class="navtool" aria-label="Collapse"><svg class="ico" viewBox="0 0 32 32" v-html="art.collapse" /></button>
            <button class="navtool wide"><svg class="ico" viewBox="0 -6 28 30" v-html="art.back" /><span>返回</span></button>
            <button class="drop" aria-label="History"><i class="caret" /></button>
            <button class="navtool wide off"><svg class="ico" viewBox="0 -6 28 30" v-html="art.forward" /><span>前进</span></button>
            <button class="navtool wide"><svg class="ico" viewBox="0 0 32 32" v-html="art.star" /><span>添加</span></button>
            <i class="sep tall" />
            <button class="navtool" aria-label="Tree"><svg class="ico" viewBox="0 0 32 32" v-html="art.treeList" /></button>
            <button class="navtool" aria-label="Refresh"><svg class="ico" viewBox="0 0 32 32" v-html="art.refresh" /></button>
            <button class="navtool" aria-label="Help"><svg class="ico" viewBox="0 0 32 32" v-html="art.help" /></button>
          </div>
          <div class="treebox">
            <ul class="tree">
              <li v-for="(r, i) in rows" :key="i">
                <svg v-for="(g, k) in r.guides" :key="k" class="guide" viewBox="0 0 48 36"><path v-if="g && k" d="M25 0v36" /></svg>
                <span class="node">
                  <svg viewBox="0 0 56 36">
                    <path v-if="!r.root" d="M25 0v21" />
                    <path v-if="r.next" d="M25 20v16" />
                    <path d="M26 21h30" />
                  </svg>
                  <button v-if="r.sign" class="exp" :aria-label="r.label"><svg viewBox="0 0 18 18"><path :d="r.sign === '+' ? 'M4 9h10M9 4v10' : 'M4 9h10'" /></svg></button>
                </span>
                <svg class="ico" viewBox="0 0 32 32" v-html="art[r.icon]" />
                <span class="label" :class="[r.tone, { cjk: r.cjk }]">{{ r.label }}</span>
              </li>
            </ul>
            <div class="scroll"><i /></div>
          </div>
        </div>
        <div class="tabs">
          <button class="tab active">ROBOGUIDE</button>
          <button class="tab cjk">收藏夹</button>
        </div>
      </aside>

      <section class="view">
        <svg class="scene">
          <g transform="translate(-668 -250)">
            <g stroke="#454545" stroke-width="2">
              <line v-for="y in floorRows" :key="'r' + y" x1="668" :y1="y" x2="2668" :y2="y + 272.2" />
            </g>
            <g stroke="#454545" stroke-width="1">
              <line v-for="x in floorCols" :key="'c' + x" :x1="x" y1="1456" :x2="x + 773" y2="250" />
            </g>
            <path d="M870 806L936 700L1168 731L1100 836z" fill="#8a5a00" />
            <path d="M870 806L1100 836V1050L870 1019z" fill="#d28900" />
            <path d="M1100 836L1168 731V945L1100 1050z" fill="#644100" />
            <path d="M982 671L998 645L1056 652L1040 678z" fill="#008c00" />
            <path d="M982 671L1040 678V785L982 777z" fill="#00d400" />
            <path d="M1040 678L1056 652V759L1040 785z" fill="#006400" />
            <path d="M1056 667L1080 667L1092 672L1126 671L1143 696L1110 708L1084 698H1056z" fill="#a0a0a0" />
            <path d="M1056 698L1084 698V717L1056 716z" fill="#8f8f8f" />
            <path d="M1083 700l24-10l24 8v24l-44 16l-5-16z" fill="#9a9a9a" />
            <path d="M1081 670l26 0l20 6l24 32M1100 682l34 38M1084 699l34 0l14 12M1112 680l16 20M1090 710l14 20" fill="none" stroke="#6e6e6e" stroke-width="6" />
            <path d="M1086 712l32-6M1090 734l46-18M1094 744l42-20M1096 760l52-18" fill="none" stroke="#6a6a6a" stroke-width="5" />
            <path d="M1098 749l42-16M1094 739l40-16M1100 754l42-16" fill="none" stroke="#a8a8a8" stroke-width="2" />
            <path d="M1103 695h4M1086 709h4M1110 718h6M1128 716h3M1087 738h4M1118 675h3M1130 708h3M1106 738h8" stroke="#c8a040" stroke-width="3" />
            <path d="M1006 734L1036 736L1095 737L1096 772L1053 770L1010 765z" fill="#a3a3a3" />
            <path d="M1064 743h2M1072 745h2M1086 747h2M1064 758h2M1072 763h2M1089 765h2" stroke="#333" stroke-width="2" />
            <path d="M1150 709L1188 708V742L1154 741z" fill="#a0a0a0" />
            <path d="M1172 709h8M1178 718h6v8" fill="none" stroke="#666" stroke-width="2" />
            <g shape-rendering="auto">
              <path d="M1132 708q14-8 24 0l6 9l-16-1h-13z" fill="#00a000" />
              <path d="M1148 712l4 14l10 3l-12 3z" fill="#0c0" />
              <circle cx="1143" cy="727" r="13" fill="#00c800" />
              <circle cx="1144" cy="723" r="8" fill="#00f800" />
            </g>
            <g fill="none" stroke="#00f" stroke-width="2">
              <path d="M713 1371V1412L708 1424M668 1405L682 1407L698 1409H712" />
              <path d="M712 1352h11L714 1371h10M668 1387l14 18M684 1386l-12 18M701 1412l6 9V1431M712 1412l-5 9l-6 9" />
            </g>
            <path d="M1300 1453h20v4h-20z" fill="#00b800" />
          </g>
        </svg>

        <section class="window">
          <header class="wtitle">
            <svg class="ico" viewBox="0 0 32 32" v-html="art.edit" />
            <h2>编辑仿真程序 - Robot Controller1 - PROG_1</h2>
            <button class="close" aria-label="Close"><svg viewBox="0 0 24 20"><path d="M6 3l12 14M18 3L6 17" stroke="#4a5060" stroke-width="8" /><path d="M6 3l12 14M18 3L6 17" stroke="#f0f0f0" stroke-width="5" /></svg></button>
          </header>
          <div class="client">
            <div class="erow">
              <i class="grip" />
              <template v-for="(t, i) in editTools" :key="i">
                <i v-if="t.icon === '|'" class="sep dark" :style="{ width: t.w + 'px' }" />
                <button v-else-if="t.icon === 'v'" class="drop" :class="{ off: t.off }" :style="{ width: t.w + 'px' }" aria-label="More"><i class="caret large" /></button>
                <button v-else class="etool" :class="{ off: t.off }" :style="{ width: t.w + 'px' }">
                  <svg class="ico" :class="{ big: t.big }" viewBox="0 0 32 32" v-html="art[t.icon]" />
                  <span :class="{ cjk: t.cjk }">{{ t.label }}</span>
                </button>
              </template>
            </div>
            <div class="lrow">
              <i class="grip" />
              <template v-for="(t, i) in lineTools" :key="i">
                <i v-if="t.icon === '|'" class="sep" :style="{ width: t.w + 'px' }" />
                <button v-else class="ltool" :class="{ on: t.on }" :style="{ width: t.w + 'px' }" :aria-label="t.icon"><svg class="ico" :class="{ mid: t.big }" viewBox="0 0 32 32" v-html="art[t.icon]" /></button>
              </template>
              <label class="combo">
                <svg class="ico" viewBox="0 0 32 32" v-html="art.controller" />
                <select v-model="controller" aria-label="Controller"><option>Robot Controller1</option></select>
                <svg class="chev" viewBox="0 0 16 10"><path d="M1 1l7 7l7-7" /></svg>
              </label>
              <label class="combo second">
                <svg class="ico" viewBox="0 0 32 32" v-html="art.cell" />
                <select v-model="program" aria-label="Program"><option>PROG_1</option></select>
                <svg class="chev" viewBox="0 0 16 10"><path d="M1 1l7 7l7-7" /></svg>
              </label>
            </div>
            <div class="sheet" />
          </div>
        </section>
      </section>
    </main>

    <footer class="status">
      <div class="cellp p1"><svg class="ico lit" viewBox="0 0 32 32" v-html="art.controller" />Robot Controller1</div>
      <div class="cellp p2"><svg class="ico" viewBox="0 0 32 32" v-html="art.pendant" />PROG_1</div>
      <div class="cellp p3">&lt;无机器人错误&gt;</div>
      <div class="cellp p4"><svg class="ico" viewBox="0 0 32 32" v-html="art.gaugeRobot" /><span>3%</span></div>
      <div class="cellp p5">PR</div>
      <div class="mark">CSDN @axzg</div>
    </footer>
  </div>
</template>

<style>
body { margin: 0; }
</style>

<style scoped>
.app {
  --mono: 'Liberation Mono', 'Noto Sans CJK SC', monospace;
  --cjk: 'Noto Sans CJK SC', sans-serif;
  display: flex; flex-direction: column; min-height: 100vh; overflow: hidden;
  background: linear-gradient(90deg, #f0f0f0, #fcfcfc); color: #000; font-family: var(--mono); font-size: 20px;
}
* { box-sizing: border-box; }
button { border: 0; padding: 0; margin: 0; background: none; font: inherit; color: inherit; }
i { display: block; }
.ico { display: block; flex: none; width: 32px; height: 32px; shape-rendering: crispEdges; }
.cjk { font-family: var(--cjk); font-size: 24px; }

.titlebar { display: flex; align-items: center; height: 46px; padding-left: 2px; background: #e9f5fb; }
.titlebar h1 { flex: 1; margin: 0; padding-left: 4px; font: 400 23px/46px 'Open Sans', sans-serif; }
.sys { width: 48px; height: 46px; display: grid; place-items: center; margin-right: 54px; }
.sys svg { width: 20px; height: 20px; }
.sys.last { width: 26px; margin: 0; }
.menubar { display: flex; height: 49px; padding-left: 9px; }
.menubar button { padding: 0 20px; font: 400 24px/48px var(--cjk); white-space: nowrap; }

.bars { display: flex; flex-direction: column; align-items: flex-start; padding-bottom: 1px; }
.bar { display: flex; align-items: center; height: 50px; margin-left: 6px; padding-right: 6px; background: linear-gradient(#fdfdfd, #f0f0f0); border-right: 2px solid #c4c4c4; border-radius: 4px 0 0 4px; }
.grip { flex: none; width: 18px; height: 30px; background: repeating-linear-gradient(#b8b8b8 0 4px, transparent 4px 8px) 6px 0 / 4px 100% no-repeat; }
.sep { flex: none; width: 12px; height: 30px; background: linear-gradient(90deg, #bdbdbd 50%, #fff 50%) center / 4px 100% no-repeat; }
.tool { display: grid; place-items: center; width: 48px; height: 46px; }
.tool.narrow { width: 44px; }
.tool.wide { width: 76px; }
.tool.on, .ltool.on { border: 4px solid #3399ff; background: #fff; box-shadow: inset 0 0 0 2px #c4daf2; }
.online { font: 400 15px/16px 'Liberation Sans', sans-serif; text-align: left; }
.drop { display: grid; place-items: center; width: 20px; height: 46px; }
.caret { border: 5px solid transparent; border-top: 6px solid #000; border-bottom: 0; }
.caret.large { border-width: 8px 8px 0; }

.work { flex: 1; display: grid; grid-template-columns: 668px 1fr; border-top: 2px solid #a0a0a0; }
.side { display: flex; flex-direction: column; padding-left: 4px; border-left: 2px solid #696969; border-top: 2px solid #696969; background: #f0f0f0; }
.page { background: #f9f9f9; border-right: 2px solid #e3e3e3; margin-right: 4px; padding: 8px 0 0 6px; }
.bar.nav { width: 430px; height: 70px; margin-left: 0; padding: 0 0 2px 5px; }
.nav .drop { width: 24px; }
.navtool { display: flex; flex-direction: column; align-items: center; width: 46px; flex: none; }
.navtool.wide { width: 66px; }
.navtool span { font: 400 24px/30px var(--cjk); }
.off { color: #6d6d6d; }
.off .caret { border-top-color: #6d6d6d; }
.sep.tall { height: 50px; width: 12px; }
.treebox { display: flex; margin-right: 2px; border: 2px solid #828790; background: #fff; }
.tree { flex: 1; margin: 0; padding: 1px 0 0; list-style: none; }
.tree li { display: flex; align-items: center; height: 36px; }
.guide { flex: none; width: 48px; height: 36px; }
.guide path, .node path { fill: none; stroke: #7a7a7a; stroke-width: 2; stroke-dasharray: 2 2; }
.node { flex: none; display: grid; width: 56px; height: 36px; }
.node > svg { grid-area: 1 / 1; width: 56px; height: 36px; }
.exp { grid-area: 1 / 1; z-index: 1; width: 18px; height: 18px; margin: 12px 0 0 16px; border: 2px solid #9a9a9a; border-radius: 2px; background: linear-gradient(#fff, #dcdcdc); display: grid; place-items: center; }
.exp svg { width: 18px; height: 18px; }
.exp path { stroke: #3c5aa8; stroke-dasharray: none; }
.label { height: 36px; margin-left: 8px; padding: 2px 4px 0; line-height: 34px; white-space: pre; }
.label.cjk { padding-top: 0; }
.hot { background: #0ff; }
.dim { background: #f0f0f0; }
.scroll { width: 32px; margin: 2px; background: #f0f0f0; padding: 34px 0 0 14px; }
.scroll i { width: 4px; height: 730px; background: #858585; }
.tabs { display: flex; align-items: flex-start; height: 42px; }
.tab { height: 36px; margin-top: 2px; padding: 0 8px; background: #f3f3f3; border-right: 2px solid #e3e3e3; line-height: 28px; }
.tab.active { height: 42px; margin-top: 0; padding: 0 14px; background: #f9f9f9; line-height: 42px; }

.view { position: relative; overflow: hidden; background: #8d8d8d; border-top: 2px solid #696969; }
.scene { position: absolute; inset: 0; width: 100%; height: 100%; shape-rendering: crispEdges; }
.window { position: absolute; left: 521px; top: 132px; right: 26px; height: 834px; display: flex; flex-direction: column; padding: 0 13px 14px; border: 2px solid #111; border-top-color: #333; border-radius: 12px 12px 0 0; box-shadow: inset 2px 2px #fff, inset -2px -2px #2cd0e8; background: linear-gradient(#99b4d1, #b9d1ea 60px, #b9d1ea 130px, #dce8f5 236px, #b9d1ea 240px); }
.wtitle { display: flex; height: 60px; padding: 14px 4px 0; align-items: flex-start; }
.wtitle .ico { margin-top: 5px; }
.wtitle h2 { flex: 1; margin: 0; padding-left: 8px; font: 400 25px/42px 'Open Sans', 'Noto Sans CJK SC', sans-serif; white-space: nowrap; }
.close { display: grid; place-items: center; width: 64px; height: 36px; margin-top: 4px; border: 2px solid #4e1420; border-radius: 4px; background: linear-gradient(#eaa79c, #dc8878 48%, #b83820 52%, #d86a58); box-shadow: inset 0 0 0 2px #f0b8ac; }
.close svg { width: 24px; height: 20px; }
.client { flex: 1; display: flex; flex-direction: column; background: #f0f0f0; }
.erow { display: flex; align-items: center; height: 80px; padding-left: 2px; }
.erow .grip { height: 76px; }
.erow .sep { height: 66px; background: linear-gradient(#909090, #909090) center / 2px 100% no-repeat; }
.erow .drop { padding-top: 6px; }
.etool { flex: none; display: flex; flex-direction: column; align-items: center; justify-content: space-between; height: 76px; padding: 3px 0 2px; }
.etool .ico { margin-top: 9px; }
.etool .ico.big { width: 46px; height: 44px; margin-top: 0; }
.etool span { line-height: 24px; }
.etool span.cjk { padding-bottom: 3px; }
.lrow { display: flex; align-items: center; height: 64px; background: linear-gradient(#fdfdfd, #f0f0f0); }
.lrow .grip { height: 44px; }
.lrow .sep { height: 24px; }
.ltool { flex: none; display: grid; place-items: center; height: 52px; }
.ico.mid { width: 44px; height: 44px; }
.combo { position: relative; flex: none; width: 302px; height: 52px; }
.combo.second { width: 318px; }
.combo .ico { position: absolute; left: 6px; top: 8px; }
.combo select { appearance: none; width: 100%; height: 52px; padding: 0 36px 6px 39px; border: 2px solid #858585; border-radius: 2px; background: #fff; font: 400 20px/24px var(--mono); color: #000; }
.chev { position: absolute; right: 10px; bottom: 17px; width: 16px; height: 10px; fill: none; stroke: #555; stroke-width: 2; }
.sheet { flex: 1; margin: 0 4px 6px; border: 2px solid; border-color: #a0a0a0 #fff #fff #a0a0a0; box-shadow: inset 2px 2px #696969, inset -2px -2px #e3e3e3; }

.status { position: relative; display: flex; gap: 4px; height: 44px; padding: 4px 0 0 2px; border-top: 2px solid #e3e3e3; background: linear-gradient(#fff 2px, #f0f0f0 2px); font-weight: 700; font-size: 23px; }
.cellp { display: flex; align-items: center; overflow: hidden; border-top: 2px solid #a0a0a0; border-left: 2px solid #a0a0a0; box-shadow: 2px 0 #fff; white-space: nowrap; }
.p1 { width: 296px; border-left: 0; gap: 6px; }
.lit { background: #fff; }
.p2 { width: 376px; gap: 2px; }
.p3 { flex: 1; padding-left: 4px; color: #6d6d6d; font: 700 25px/38px 'Liberation Mono', var(--cjk); }
.p4 { width: 108px; }
.p4 span { flex: 1; text-align: center; padding-left: 12px; }
.p5 { width: 616px; justify-content: flex-end; }
.mark { position: absolute; right: 4px; bottom: 16px; font: 400 44px/56px 'Open Sans', sans-serif; color: rgba(235, 235, 235, 0.75); text-shadow: 1px 2px 1px rgba(90, 90, 90, 0.6); white-space: nowrap; }
</style>
